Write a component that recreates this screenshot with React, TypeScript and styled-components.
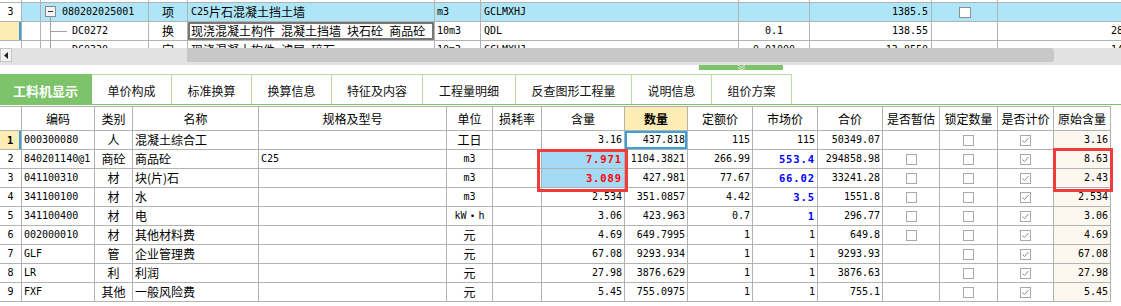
import React from 'react';
import styled, { createGlobalStyle } from 'styled-components';

const LINE = '#b2b2b2';
const GREEN = '#7cc36a';
const LIGHT_GREEN = '#b6e0a4';
const YELLOW = '#fdecb4';
const FOCUS_BLUE = '#3aa0da';

const GlobalStyle = createGlobalStyle`
  html, body { margin: 0; padding: 0; background: #fff; }
  body {
    width: 1121px; height: 306px; overflow: hidden;
    font-family: "Noto Sans CJK SC", "Noto Sans", sans-serif;
    font-size: 12px; color: #000;
  }
  * { box-sizing: border-box; }
`;

const Page = styled.div`
  width: 1121px;
  height: 306px;
  overflow: hidden;
  display: flex;
  flex-direction: column;
  background: #fff;
`;

const Latin = styled.span`
  font-family: "DejaVu Sans Mono", "Liberation Mono", monospace;
  font-size: 10px;
`;

function T({ s }: { s: string }) {
  const parts = s.split(/([\x20-\x7E]+)/);
  return (
    <>
      {parts.map((p, i) =>
        p === '' ? null : /^[\x20-\x7E]+$/.test(p) ? <Latin key={i}>{p}</Latin> : <span key={i}>{p}</span>
      )}
    </>
  );
}

type Align = 'left' | 'center' | 'right';

const Cell = styled.div<{ $align?: Align; $bg?: string; $bold?: boolean; $color?: string; $shadow?: string }>`
  display: flex;
  align-items: center;
  justify-content: ${(p) => (p.$align === 'center' ? 'center' : p.$align === 'right' ? 'flex-end' : 'flex-start')};
  padding: 0 2px;
  border-right: 1px solid ${LINE};
  border-bottom: 1px solid ${LINE};
  overflow: hidden;
  white-space: pre;
  line-height: 1;
  background: ${(p) => p.$bg || 'transparent'};
  font-weight: ${(p) => (p.$bold ? 700 : 400)};
  color: ${(p) => p.$color || '#000'};
  box-shadow: ${(p) => p.$shadow || 'none'};

  ${Latin} {
    letter-spacing: ${(p) => (p.$bold ? '0.9px' : '0')};
    font-size: ${(p) => (p.$bold ? '10.5px' : '10px')};
  }
`;

/* ---------- top grid ---------- */
const TOP_COLS = '22px 19px 108px 39px 247px 46px 258px 71px 122px 66px 164px';

const TopGrid = styled.div`
  height: 48px;
  overflow: hidden;
  flex: none;
`;

const TopRow = styled.div<{ $h: number; $bg?: string }>`
  display: grid;
  grid-template-columns: ${TOP_COLS};
  width: 1162px;
  height: ${(p) => p.$h}px;
  background: ${(p) => p.$bg || '#fff'};
`;

const TreeCell = styled(Cell)`
  padding: 0;
`;

const TreeSvg = styled.svg`
  display: block;
  flex: none;
`;

const TopCheck = styled.span`
  width: 12px;
  height: 11px;
  border: 1px solid #8e8e8e;
  background: #fff;
`;

function TreeRoot() {
  return (
    <TreeSvg width="21" height="18" viewBox="0 0 21 18">
      <rect x="4.5" y="3.5" width="10" height="10" fill="#f4f4f4" stroke="#8a8a8a" />
      <line x1="7" y1="8.5" x2="12" y2="8.5" stroke="#333" />
      <line x1="9.5" y1="14" x2="9.5" y2="18" stroke="#a0a0a0" />
    </TreeSvg>
  );
}

function TreeBranch() {
  return (
    <TreeSvg width="31" height="18" viewBox="0 0 31 18">
      <line x1="9.5" y1="0" x2="9.5" y2="18" stroke="#a0a0a0" />
      <line x1="9.5" y1="9.5" x2="26" y2="9.5" stroke="#a0a0a0" />
    </TreeSvg>
  );
}

/* ---------- scrollbar ---------- */
const HScroll = styled.div`
  flex: none;
  display: flex;
  height: 17px;
  background: #e2e2e2;
`;

const ArrowBtn = styled.div`
  width: 12px;
  height: 14px;
  background: #f2f2f2;
  border: 1px solid #c6c6c6;
  display: flex;
  align-items: center;
  justify-content: center;
`;

const Thumb = styled.div`
  margin-left: 175px;
  width: 867px;
  height: 14px;
  background: #c8c8c8;
  border-radius: 0 3px 3px 0;
`;

/* ---------- splitter ---------- */
const Splitter = styled.div`
  flex: none;
  height: 9px;
  display: flex;
`;

const Handle = styled.div`
  margin-left: 699px;
  width: 84px;
  height: 5px;
  background: ${GREEN};
  display: flex;
  justify-content: center;
  align-items: flex-start;
`;

/* ---------- tabs ---------- */
const TabBar = styled.div`
  flex: none;
  display: flex;
  height: 31px;
  border-bottom: 1px solid ${GREEN};
`;

const Tab = styled.div<{ $w: number; $active?: boolean }>`
  width: ${(p) => p.$w}px;
  height: 30px;
  display: flex;
  align-items: center;
  justify-content: center;
  border-top: 1px solid ${(p) => (p.$active ? GREEN : LIGHT_GREEN)};
  border-right: 1px solid ${(p) => (p.$active ? GREEN : LIGHT_GREEN)};
  background: ${(p) => (p.$active ? GREEN : '#fff')};
  color: ${(p) => (p.$active ? '#fff' : '#111')};
  font-size: ${(p) => (p.$active ? 13 : 12)}px;
  font-weight: ${(p) => (p.$active ? 700 : 400)};
  padding-top: 1px;
`;

/* ---------- bottom table ---------- */
const COLS = '22px 73px 38px 126px 188px 46px 49px 83px 63px 65px 65px 65px 57px 58px 56px 57px';

const TableWrap = styled.div`
  position: relative;
  width: 1111px;
  margin-top: 1px;
  border-top: 1px solid ${LINE};
`;

const GridRow = styled.div<{ $h: number }>`
  display: grid;
  grid-template-columns: ${COLS};
  height: ${(p) => p.$h}px;
`;

const Box = styled.span`
  width: 11px;
  height: 11px;
  border: 1px solid #a9a9a9;
  background: #fff;
  display: flex;
  align-items: center;
  justify-content: center;
`;

const Mark = styled.div<{ $x: number; $y: number; $w: number; $h: number }>`
  position: absolute;
  left: ${(p) => p.$x}px;
  top: ${(p) => p.$y}px;
  width: ${(p) => p.$w}px;
  height: ${(p) => p.$h}px;
  border: 3px solid #f03c3c;
  pointer-events: none;
`;

function Check({ on }: { on: boolean }) {
  return (
    <Box>
      {on && (
        <svg width="9" height="9" viewBox="0 0 9 9">
          <polyline points="1.5,4.5 3.5,6.5 7.5,2" fill="none" stroke="#8a8a8a" strokeWidth="1" />
        </svg>
      )}
    </Box>
  );
}

type Row = {
  code: string;
  type: string;
  name: string;
  spec: string;
  unit: string;
  qty: string;
  amount: string;
  quota: string;
  market: string;
  blue?: boolean;
  total: string;
  est: boolean;
  orig: string;
};

const rows: Row[] = [
  { code: '000300080', type: '人', name: '混凝土综合工', spec: '', unit: '工日', qty: '3.16', amount: '437.818', quota: '115', market: '115', total: '50349.07', est: false, orig: '3.16' },
  { code: '840201140@1', type: '商砼', name: '商品砼', spec: 'C25', unit: 'm3', qty: '7.971', amount: '1104.3821', quota: '266.99', market: '553.4', blue: true, total: '294858.98', est: true, orig: '8.63' },
  { code: '041100310', type: '材', name: '块(片)石', spec: '', unit: 'm3', qty: '3.089', amount: '427.981', quota: '77.67', market: '66.02', blue: true, total: '33241.28', est: true, orig: '2.43' },
  { code: '341100100', type: '材', name: '水', spec: '', unit: 'm3', qty: '2.534', amount: '351.0857', quota: '4.42', market: '3.5', blue: true, total: '1551.8', est: true, orig: '2.534' },
  { code: '341100400', type: '材', name: '电', spec: '', unit: 'kW·h', qty: '3.06', amount: '423.963', quota: '0.7', market: '1', blue: true, total: '296.77', est: true, orig: '3.06' },
  { code: '002000010', type: '材', name: '其他材料费', spec: '', unit: '元', qty: '4.69', amount: '649.7995', quota: '1', market: '1', total: '649.8', est: true, orig: '4.69' },
  { code: 'GLF', type: '管', name: '企业管理费', spec: '', unit: '元', qty: '67.08', amount: '9293.934', quota: '1', market: '1', total: '9293.93', est: false, orig: '67.08' },
  { code: 'LR', type: '利', name: '利润', spec: '', unit: '元', qty: '27.98', amount: '3876.629', quota: '1', market: '1', total: '3876.63', est: false, orig: '27.98' },
  { code: 'FXF', type: '其他', name: '一般风险费', spec: '', unit: '元', qty: '5.45', amount: '755.0975', quota: '1', market: '1', total: '755.1', est: false, orig: '5.45' },
];

const headers = ['', '编码', '类别', '名称', '规格及型号', '单位', '损耗率', '含量', '数量', '定额价', '市场价', '合价', '是否暂估', '锁定数量', '是否计价', '原始含量'];

const tabs: [string, number][] = [
  ['工料机显示', 92],
  ['单价构成', 80],
  ['标准换算', 80],
  ['换算信息', 80],
  ['特征及内容', 91],
  ['工程量明细', 93],
  ['反查图形工程量', 116],
  ['说明信息', 80],
  ['组价方案', 80],
];

const ROW_BLUE = '#aee6f7';
const HI_BLUE = '#a5daf7';
const ORIG_BG = '#fcf7ef';

export default function App() {
  return (
    <>
      <GlobalStyle />
      <Page>
        <TopGrid>
          <TopRow $h={3}>
            {Array.from({ length: 11 }).map((_, i) => (
              <Cell key={i} />
            ))}
          </TopRow>
          <TopRow $h={19} $bg={ROW_BLUE}>
            <Cell $align="center" $bg="#fff"><T s="3" /></Cell>
            <Cell />
            <TreeCell><TreeRoot /><T s="080202025001" /></TreeCell>
            <Cell $align="center">项</Cell>
            <Cell style={{ paddingLeft: 3 }}><T s="C25片石混凝土挡土墙" /></Cell>
            <Cell><T s="m3" /></Cell>
            <Cell style={{ paddingLeft: 3 }}><T s="GCLMXHJ" /></Cell>
            <Cell />
            <Cell $align="right" style={{ paddingRight: 3 }}><T s="1385.5" /></Cell>
            <Cell $align="center"><TopCheck /></Cell>
            <Cell />
          </TopRow>
          <TopRow $h={19}>
            <Cell $bg={YELLOW} $shadow={`inset -2px 0 0 ${FOCUS_BLUE}`} />
            <Cell />
            <TreeCell><TreeBranch /><T s="DC0272" /></TreeCell>
            <Cell $align="center">换</Cell>
            <Cell $shadow="inset 0 0 0 2px #777" style={{ paddingLeft: 3 }}>
              <T s="现浇混凝土构件 混凝土挡墙 块石砼 商品砼" />
            </Cell>
            <Cell><T s="10m3" /></Cell>
            <Cell style={{ paddingLeft: 3 }}><T s="QDL" /></Cell>
            <Cell $align="center"><T s="0.1" /></Cell>
            <Cell $align="right" style={{ paddingRight: 3 }}><T s="138.55" /></Cell>
            <Cell />
            <Cell style={{ paddingLeft: 113 }}><T s="28383.47" /></Cell>
          </TopRow>
          <TopRow $h={19}>
            <Cell />
            <Cell />
            <TreeCell><TreeBranch /><T s="DC0330" /></TreeCell>
            <Cell $align="center">定</Cell>
            <Cell style={{ paddingLeft: 3 }}><T s="现浇混凝土构件 滤层 碎石" /></Cell>
            <Cell><T s="10m3" /></Cell>
            <Cell style={{ paddingLeft: 3 }}><T s="GCLMXHJ" /></Cell>
            <Cell $align="center"><T s="0.01000" /></Cell>
            <Cell $align="right" style={{ paddingRight: 3 }}><T s="13.8550" /></Cell>
            <Cell />
            <Cell style={{ paddingLeft: 113 }}><T s="1483.56" /></Cell>
          </TopRow>
        </TopGrid>

        <HScroll>
          <ArrowBtn>
            <svg width="4" height="7" viewBox="0 0 4 7">
              <polygon points="4,0 0,3.5 4,7" fill="#222" />
            </svg>
          </ArrowBtn>
          <Thumb />
        </HScroll>

        <Splitter>
          <Handle>
            <svg width="9" height="5" viewBox="0 0 9 5">
              <polyline points="1,0 4.5,2.5 8,0" fill="none" stroke="#e6f4df" strokeWidth="1" />
              <polyline points="1,2.5 4.5,5 8,2.5" fill="none" stroke="#e6f4df" strokeWidth="1" />
            </svg>
          </Handle>
        </Splitter>

        <TabBar>
          {tabs.map(([t, w], i) => (
            <Tab key={t} $w={w} $active={i === 0}>{t}</Tab>
          ))}
        </TabBar>

        <TableWrap>
          <GridRow $h={24}>
            {headers.map((h, i) => (
              <Cell key={i} $align="center" $bg={i === 8 ? YELLOW : undefined} $bold={i === 8}>
                {h}
              </Cell>
            ))}
          </GridRow>
          {rows.map((r, idx) => {
            const first = idx === 0;
            const hi = idx === 1 || idx === 2;
            return (
              <GridRow key={idx} $h={19}>
                <Cell
                  $align="center"
                  $bg={first ? YELLOW : undefined}
                  $bold={first}
                  $shadow={first ? `inset -2px 0 0 ${FOCUS_BLUE}` : undefined}
                >
                  <T s={String(idx + 1)} />
                </Cell>
                <Cell><T s={r.code} /></Cell>
                <Cell $align="center">{r.type}</Cell>
                <Cell>{r.name}</Cell>
                <Cell><T s={r.spec} /></Cell>
                <Cell $align="center"><T s={r.unit} /></Cell>
                <Cell />
                <Cell $align="right" $bg={hi ? HI_BLUE : undefined} $bold={hi} $color={hi ? '#ff0000' : undefined}>
                  <T s={r.qty} />
                </Cell>
                <Cell $align="right" $shadow={first ? `inset 0 0 0 2px ${FOCUS_BLUE}` : undefined}>
                  <T s={r.amount} />
                </Cell>
                <Cell $align="right"><T s={r.quota} /></Cell>
                <Cell $align="right" $bold={r.blue} $color={r.blue ? '#0000ff' : undefined}>
                  <T s={r.market} />
                </Cell>
                <Cell $align="right"><T s={r.total} /></Cell>
                <Cell $align="center">{r.est && <Check on={false} />}</Cell>
                <Cell $align="center"><Check on={false} /></Cell>
                <Cell $align="center"><Check on /></Cell>
                <Cell $align="right" $bg={ORIG_BG}><T s={r.orig} /></Cell>
              </GridRow>
            );
          })}
          <Mark $x={537} $y={42} $w={91} $h={43} />
          <Mark $x={1053} $y={41} $w={60} $h={44} />
        </TableWrap>
      </Page>
    </>
  );
}
